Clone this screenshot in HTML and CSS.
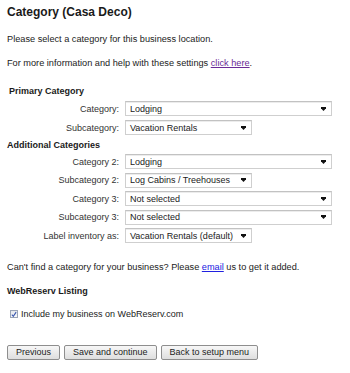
FILE: index.html
```html
<!DOCTYPE html>
<html>
<head>
<meta charset="utf-8">
<link rel="stylesheet" href="styles.css">
</head>
<body>
<div class="page">
  <h1 class="title">Category (Casa Deco)</h1>
  <p class="intro first">Please select a category for this business location.</p>
  <p class="intro">For more information and help with these settings <a class="visited" href="#">click here</a>.</p>

  <h2 class="section indent">Primary Category</h2>
  <div class="rows primary">
    <label class="lbl">Category:</label>
    <div class="select wide"><span>Lodging</span><svg class="arrow" width="5" height="4" viewBox="0 0 5 4"><path d="M0 0H5V1.2L2.5 4L0 1.2Z"/></svg></div>
    <label class="lbl">Subcategory:</label>
    <div class="select narrow"><span>Vacation Rentals</span><svg class="arrow" width="5" height="4" viewBox="0 0 5 4"><path d="M0 0H5V1.2L2.5 4L0 1.2Z"/></svg></div>
  </div>

  <h2 class="section additional">Additional Categories</h2>
  <div class="rows secondary">
    <label class="lbl">Category 2:</label>
    <div class="select wide"><span>Lodging</span><svg class="arrow" width="5" height="4" viewBox="0 0 5 4"><path d="M0 0H5V1.2L2.5 4L0 1.2Z"/></svg></div>
    <label class="lbl">Subcategory 2:</label>
    <div class="select narrow"><span>Log Cabins / Treehouses</span><svg class="arrow" width="5" height="4" viewBox="0 0 5 4"><path d="M0 0H5V1.2L2.5 4L0 1.2Z"/></svg></div>
    <label class="lbl">Category 3:</label>
    <div class="select wide"><span>Not selected</span><svg class="arrow" width="5" height="4" viewBox="0 0 5 4"><path d="M0 0H5V1.2L2.5 4L0 1.2Z"/></svg></div>
    <label class="lbl">Subcategory 3:</label>
    <div class="select wide"><span>Not selected</span><svg class="arrow" width="5" height="4" viewBox="0 0 5 4"><path d="M0 0H5V1.2L2.5 4L0 1.2Z"/></svg></div>
    <label class="lbl">Label inventory as:</label>
    <div class="select narrow"><span>Vacation Rentals (default)</span><svg class="arrow" width="5" height="4" viewBox="0 0 5 4"><path d="M0 0H5V1.2L2.5 4L0 1.2Z"/></svg></div>
  </div>

  <p class="missing">Can't find a category for your business? Please <a class="link" href="#">email</a> us to get it added.</p>

  <h2 class="section listing">WebReserv Listing</h2>
  <div class="check-row">
    <span class="checkbox"><svg width="7" height="7" viewBox="0 0 7 7"><path d="M1 3.6L2.7 5.6L6 0.8" fill="none" stroke="#3a58b0" stroke-width="1.3"/></svg></span>
    <span>Include my business on WebReserv.com</span>
  </div>

  <div class="buttons">
    <button class="btn">Previous</button>
    <button class="btn">Save and continue</button>
    <button class="btn">Back to setup menu</button>
  </div>
</div>
</body>
</html>
```

FILE: styles.css
```css
html, body {
  margin: 0;
  padding: 0;
  background: #ffffff;
}
body {
  font-family: "Liberation Sans", Arial, sans-serif;
  font-size: 9px;
  color: #222222;
}
.page {
  padding: 3px 7px 0 7px;
}
.title {
  margin: 0;
  font-size: 12px;
  font-weight: bold;
  line-height: 18px;
  color: #1a1a1a;
}
.intro {
  margin: 12px 0 0 0;
  font-size: 9.2px;
  line-height: 12px;
}
.visited {
  color: #6a2a96;
  text-decoration: underline;
}
.link {
  color: #2020e0;
  text-decoration: underline;
}
.section {
  margin: 0;
  font-size: 9px;
  font-weight: bold;
  line-height: 12px;
  color: #1a1a1a;
}
.indent {
  margin-top: 16px;
  padding-left: 2px;
}
.additional {
  margin-top: 4px;
}
.rows {
  display: grid;
  grid-template-columns: 112px auto;
  column-gap: 6px;
  align-items: center;
  justify-items: start;
}
.primary {
  margin-top: 4px;
  row-gap: 4px;
}
.secondary {
  margin-top: 3px;
  row-gap: 3.6px;
}
.lbl {
  justify-self: end;
  color: #333333;
  line-height: 12px;
}
.select {
  box-sizing: border-box;
  height: 15px;
  display: flex;
  align-items: center;
  justify-content: space-between;
  padding: 0 5px 0 4px;
  border: 1px solid #cfcfcf;
  border-top-color: #c2c2c2;
  box-shadow: inset 0 1px 0 #ececec;
  background: #ffffff;
  color: #222222;
  white-space: nowrap;
}
.wide {
  width: 207px;
}
.narrow {
  width: 127px;
}
.arrow {
  fill: #111111;
  flex: none;
}
.missing {
  margin: 17.6px 0 0 0;
  font-size: 9.2px;
  line-height: 12px;
}
.listing {
  margin-top: 12px;
}
.check-row {
  margin-top: 11px;
  display: flex;
  align-items: center;
  height: 13px;
  padding-left: 3px;
  gap: 3px;
  color: #222222;
}
.checkbox {
  box-sizing: border-box;
  width: 8px;
  height: 8px;
  border: 1px solid #9aa4b6;
  background: linear-gradient(#e4e7ec, #f8f9fb);
  display: flex;
  align-items: center;
  justify-content: center;
}
.checkbox svg {
  display: block;
}
.buttons {
  margin-top: 24px;
  display: flex;
  gap: 4px;
}
.btn {
  box-sizing: border-box;
  height: 15px;
  padding: 0 8px;
  margin: 0;
  font-family: "Liberation Sans", Arial, sans-serif;
  font-size: 9px;
  line-height: 13px;
  color: #222222;
  border: 1px solid #8e8e8e;
  border-radius: 2px;
  background: linear-gradient(#f7f7f7, #dedede);
}
```
